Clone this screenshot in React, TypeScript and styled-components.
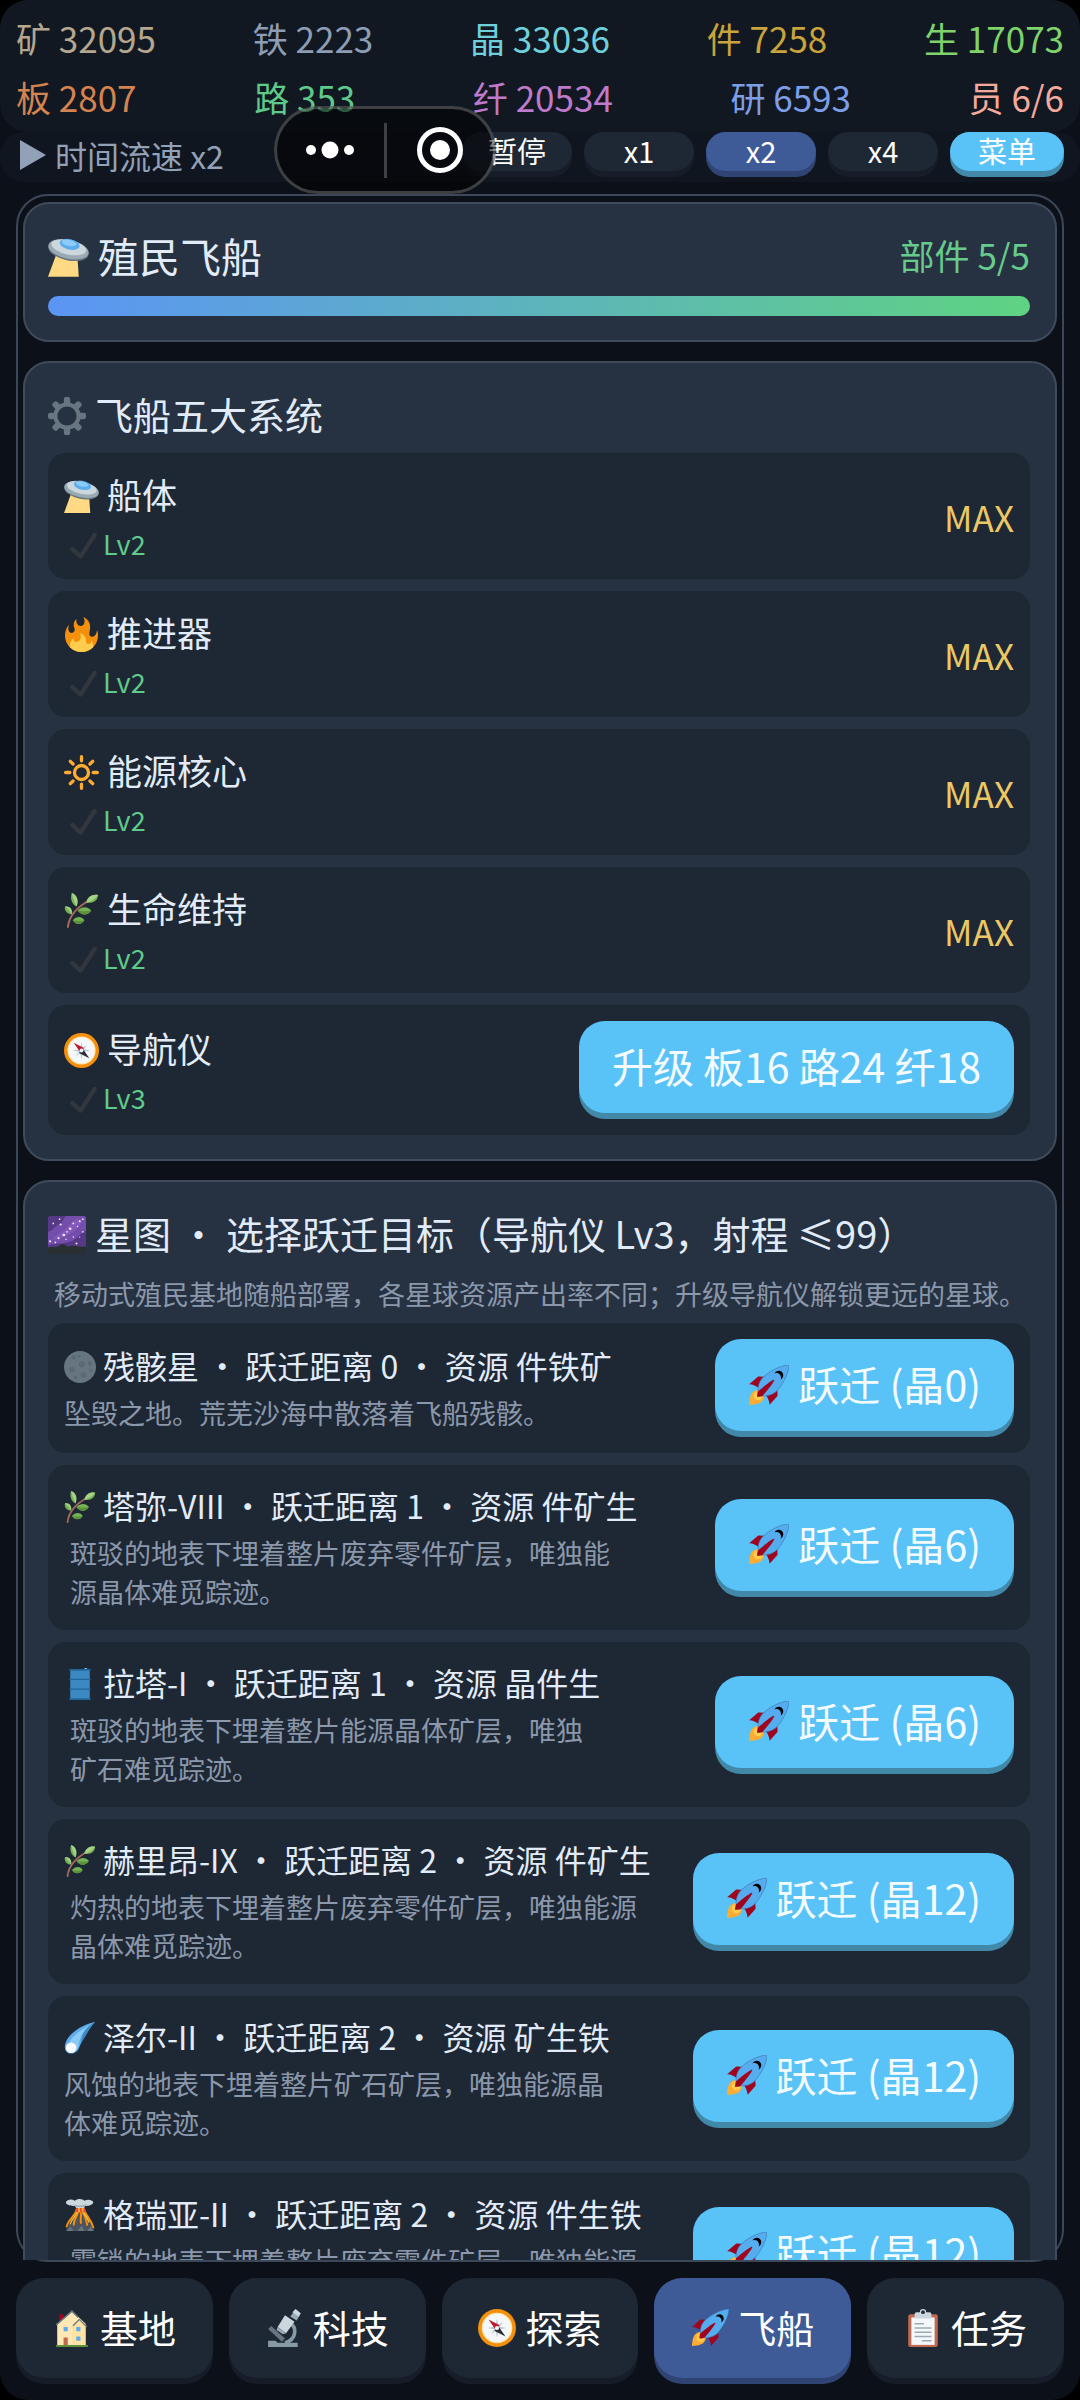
import {ReactNode, useState} from "react";
import styled, {createGlobalStyle} from "styled-components";

const GlobalStyle = createGlobalStyle`
  * {
    box-sizing: border-box;
  }

  body {
    margin: 0;
    background: #000;
    color: #e2ebf8;
    font-family: "Noto Sans CJK SC", sans-serif;
    font-weight: 400;
  }

  button {
    border: none;
    padding: 0;
    color: inherit;
    font: inherit;
    cursor: pointer;
  }

  h1, h2, h3, p, ul {
    margin: 0;
    padding: 0;
    font-weight: inherit;
    list-style: none;
  }
`

const Shell = styled.div`
  position: relative;
  height: 100vh;
  display: flex;
  flex-direction: column;
  overflow: hidden;
  border-radius: 28px;
  background: #0c1119;
`

const ResourceBar = styled.header`
  padding: 8px 16px 6px;
  border-radius: 28px;
  background: #111821;
`

const ResourceRow = styled.div`
  display: flex;
  justify-content: space-between;
  font-size: 35px;
  line-height: 59px;
`

const Resource = styled.span<{ $color: string }>`
  color: ${(p) => p.$color};
  white-space: nowrap;
`

const SpeedBar = styled.div`
  height: 50px;
  padding: 0 16px;
  display: flex;
  align-items: flex-start;
  gap: 12px;
  border-radius: 24px;
  background: #10161f;
`

const SpeedLabel = styled.div`
  flex: 1;
  display: flex;
  align-items: center;
  gap: 9px;
  padding-left: 4px;
  font-size: 32px;
  line-height: 46px;
  color: #93a1b8;
  white-space: nowrap;
`

type Tone = "dark" | "active" | "primary";

const tones: Record<Tone, { face: string, edge: string }> = {
    dark: {face: "#1e2734", edge: "#161d28"},
    active: {face: "#3e5a97", edge: "#304473"},
    primary: {face: "#59c3f7", edge: "#4289a9"},
};

const SpeedButton = styled.button<{ $tone: Tone }>`
  width: ${(p) => p.$tone === "primary" ? 114 : 110}px;
  height: 39px;
  padding-bottom: 2px;
  border-radius: 20px;
  background: ${(p) => tones[p.$tone].face};
  box-shadow: 0 6px 0 ${(p) => tones[p.$tone].edge};
  color: #fff;
  font-size: 29px;
  line-height: 37px;
`

const Capsule = styled.div`
  position: absolute;
  top: 106px;
  left: 274px;
  width: 222px;
  height: 88px;
  display: flex;
  align-items: center;
  border: 3px solid rgba(255, 255, 255, 0.22);
  border-radius: 44px;
  background: rgba(0, 0, 0, 0.55);
`

const CapsuleButton = styled.button`
  flex: 1;
  height: 100%;
  display: flex;
  align-items: center;
  justify-content: center;
  background: none;
`

const CapsuleDivider = styled.span`
  width: 3px;
  height: 55px;
  background: #3d4045;
`

const Viewport = styled.main`
  flex: 1;
  min-height: 0;
  margin: 12px 16px 0;
  padding: 6px 5px 0;
  border: 2px solid #3c4757;
  border-radius: 32px;
`

const Scroller = styled.div`
  height: 100%;
  display: flex;
  flex-direction: column;
  gap: 19px;
  overflow: hidden;
`

const Card = styled.section`
  flex: none;
  padding: 22px 25px 24px 23px;
  border: 2px solid #3f4b5b;
  border-radius: 26px;
  background: #263141;
`

const CardHead = styled.div`
  display: flex;
  justify-content: space-between;
  align-items: center;
  line-height: 58px;
`

const ShipTitle = styled.h1`
  display: flex;
  align-items: center;
  gap: 9px;
  font-size: 41px;
`

const PartCount = styled.span`
  font-size: 35px;
  color: #66cb8c;
`

const Progress = styled.div`
  height: 20px;
  margin-top: 12px;
  border-radius: 10px;
  background: linear-gradient(90deg, #5b95f5, #5fd382);
`

const CardTitle = styled.h2`
  display: flex;
  align-items: center;
  gap: 9px;
  margin-bottom: 6px;
  font-size: 38px;
  line-height: 58px;
  white-space: nowrap;
`

const Intro = styled.p`
  padding-left: 6px;
  font-size: 27px;
  line-height: 51px;
  color: #8b98ab;
`

const RowList = styled.ul`
  display: flex;
  flex-direction: column;
  gap: 12px;
  padding-top: 4px;
`

const Row = styled.li`
  min-height: 126px;
  padding: 16px;
  display: flex;
  align-items: center;
  justify-content: space-between;
  gap: 24px;
  border-radius: 18px;
  background: #1e2734;
`

const SystemName = styled.h3`
  display: flex;
  align-items: center;
  gap: 8px;
  margin-bottom: 5px;
  font-size: 35px;
  line-height: 50px;
`

const Level = styled.div`
  display: flex;
  align-items: center;
  gap: 6px;
  padding-left: 6px;
  font-size: 27px;
  line-height: 39px;
  color: #5fcb8b;
`

const MaxMark = styled.span`
  font-size: 35px;
  color: #ecc765;
`

const PlanetInfo = styled.div`
  flex: 1;
  padding-bottom: 3px;
`

const PlanetName = styled.h3`
  display: flex;
  align-items: center;
  gap: 7px;
  font-size: 32px;
  line-height: 48px;
  white-space: nowrap;
`

const PlanetText = styled.p<{ $indent: boolean }>`
  margin-top: 4px;
  padding-left: ${(p) => p.$indent ? 6 : 0}px;
  font-size: 27px;
  line-height: 39px;
  color: #8b98ab;
`

const ActionButton = styled.button`
  flex: none;
  height: 92px;
  margin-bottom: 6px;
  padding: 0 33px 4px;
  display: flex;
  align-items: center;
  gap: 9px;
  border-radius: 26px;
  background: ${tones.primary.face};
  box-shadow: 0 6px 0 ${tones.primary.edge};
  color: #f4fbff;
  font-size: 41px;
  line-height: 60px;
  white-space: nowrap;
`

const TabBar = styled.nav`
  display: flex;
  gap: 16px;
  padding: 16px 16px 22px;
`

const TabButton = styled.button<{ $tone: Tone }>`
  flex: 1;
  height: 100px;
  padding-bottom: 4px;
  display: flex;
  align-items: center;
  justify-content: center;
  gap: 9px;
  border-radius: 28px;
  background: ${(p) => tones[p.$tone].face};
  box-shadow: 0 6px 0 ${(p) => tones[p.$tone].edge};
  color: #fff;
  font-size: 38px;
`

const IconSvg = styled.svg`
  flex: none;
  width: 1em;
  height: 1em;
  margin-top: 4px;
`

const icons: Record<string, ReactNode> = {
    ufo: <>
        <path fill="#FFD983" d="M7 16L0 35h27l-1-15z"/>
        <ellipse cx="18" cy="12" rx="18" ry="8.500" transform="rotate(12 18 12)" fill="#66757F"/>
        <ellipse cx="18" cy="10.800" rx="18" ry="8.200" transform="rotate(12 18 10.800)" fill="#99AAB5"/>
        <ellipse cx="18.300" cy="9" rx="15.500" ry="6.400" transform="rotate(12 18.300 9)" fill="#CCD6DD"/>
        <ellipse cx="19" cy="6.500" rx="9" ry="4.600" transform="rotate(12 19 6.500)" fill="#5DADEC"/>
        <ellipse cx="18.500" cy="5.200" rx="6.500" ry="2.600" transform="rotate(12 18.500 5.200)" fill="#8CCAF7"/>
    </>,
    gear: <path fill="#66757F" d="M34 15h-3.362c-.324-1.369-.864-2.651-1.582-3.814l2.379-2.379c.781-.781.781-2.048 0-2.829l-1.414-1.414c-.781-.781-2.047-.781-2.828 0l-2.379 2.379C23.65 6.225 22.369 5.686 21 5.362V2c0-1.104-.896-2-2-2h-2c-1.104 0-2 .896-2 2v3.362c-1.369.324-2.651.864-3.814 1.582L8.808 4.565c-.781-.781-2.048-.781-2.828 0L4.565 5.979c-.781.781-.781 2.048-.001 2.829l2.379 2.379C6.225 12.35 5.686 13.632 5.362 15H2c-1.104 0-2 .896-2 2v2c0 1.104.896 2 2 2h3.362c.324 1.368.864 2.65 1.582 3.813l-2.379 2.379c-.78.78-.78 2.048.001 2.829l1.414 1.414c.78.78 2.047.78 2.828 0l2.379-2.379c1.163.719 2.445 1.258 3.814 1.582V34c0 1.104.896 2 2 2h2c1.104 0 2-.896 2-2v-3.362c1.368-.324 2.65-.864 3.813-1.582l2.379 2.379c.781.781 2.047.781 2.828 0l1.414-1.414c.781-.781.781-2.048 0-2.829l-2.379-2.379c.719-1.163 1.258-2.445 1.582-3.814H34c1.104 0 2-.896 2-2v-2C36 15.896 35.104 15 34 15zM18 27c-4.970 0-9-4.030-9-9s4.030-9 9-9 9 4.030 9 9-4.030 9-9 9z"/>,
    fire: <>
        <path fill="#F4900C" d="M35 19c0-2.062-.367-4.039-1.04-5.868-.46 5.389-3.333 8.157-6.335 6.868-2.812-1.208-.917-5.917-.777-8.164.236-3.809-.012-8.169-6.931-11.794 2.875 5.5.333 8.917-2.333 9.125-2.958.231-5.667-2.542-4.667-7.042-3.238 2.386-3.332 6.402-2.333 9 1.042 2.708-.042 4.958-2.583 5.208-2.84.28-4.418-3.041-2.963-8.333C2.52 10.965 1 14.805 1 19c0 9.389 7.611 17 17 17s17-7.611 17-17z"/>
        <path fill="#FFCC4D" d="M28.394 23.999c.148 3.084-2.561 4.293-4.019 3.709-2.106-.843-1.541-2.291-2.083-5.291s-2.625-5.083-5.708-6c2.25 6.333-1.247 8.667-3.08 9.084-1.872.426-3.753-.001-3.968-4.007C7.352 23.668 6 26.676 6 30c0 .368.023.73.055 1.09C9.125 34.124 13.342 36 18 36s8.875-1.876 11.945-4.91c.032-.36.055-.722.055-1.09 0-2.187-.584-4.236-1.606-6.001z"/>
    </>,
    sun: <g fill="none" stroke="#FFAC33" strokeWidth="3.4" strokeLinecap="round">
        <circle cx="18" cy="18" r="7.200"/>
        <path d="M18 1.700v4.300M18 30v4.300M1.700 18h4.300M30 18h4.300M6.500 6.500l2.800 2.800M26.700 26.700l2.800 2.800M6.500 29.500l2.800-2.800M26.700 9.300l2.800-2.800"/>
    </g>,
    herb: <>
        <path fill="none" stroke="#A5695B" strokeWidth="2" strokeLinecap="round" d="M4 35C5 24 14 14 27 7"/>
        <path fill="#77B255" d="M8 0c5 2 8 7 5 14C8 12 6 5 8 0zM1 14c5-1 8 3 7 8-5 0-8-4-7-8zM35 2c0 5-4 9-12 8 1-6 6-9 12-8zM14 18c5-5 11-4 14 0-3 5-10 6-14 0zM9 28c4-5 10-4 12 0-3 5-9 5-12 0z"/>
        <path fill="#A6D388" d="M8 0c5 2 7 7 5 14C11 10 9 5 8 0zM35 2c-6-1-11 2-12 8 5-1 9-4 12-8zM1 14c5-1 8 3 7 8-2-4-4-6-7-8z"/>
        <path fill="#5C913B" d="M14 18c4 6 11 5 14 0-5 1-9 1-14 0zM9 28c3 5 9 5 12 0-4 1-8 1-12 0z"/>
    </>,
    compass: <>
        <circle cx="18" cy="18" r="18" fill="#F4900C"/>
        <circle cx="18" cy="18" r="14.500" fill="#FFE8B6"/>
        <circle cx="18" cy="18" r="13.200" fill="#F5F8FA"/>
        <path fill="#B8C5CE" d="M18 9l1.200 6.500 4.800-3.500-3.500 4.800L27 18l-6.500 1.200 3.500 4.800-4.800-3.500L18 27l-1.200-6.500L12 24l3.500-4.800L9 18l6.500-1.200L12 12l4.800 3.500z"/>
        <path fill="#BE1931" d="M10 10l10.500 5.500-4 4z"/>
        <path fill="#292F33" d="M26 26l-10.500-5.500 4-4z"/>
        <circle cx="18" cy="18" r="2" fill="#F5F8FA"/>
    </>,
    check: <path fill="#31373D" d="M34.459 1.375c-1.391-.902-3.248-.506-4.149.884L13.5 28.17l-8.198-7.58c-1.217-1.125-3.114-1.051-4.239.166-1.125 1.216-1.051 3.114.166 4.239l10.764 9.952s.309.266.452.359c.504.328 1.07.484 1.63.484.982 0 1.945-.482 2.52-1.368L35.343 5.524c.902-1.39.506-3.248-.884-4.149z"/>,
    galaxy: <>
        <path fill="#553986" d="M2 0h32a2 2 0 012 2v28H0V2a2 2 0 012-2z"/>
        <path fill="#744EAA" d="M17 0h17a2 2 0 012 2v12c-6 2-8 8-14 10-8 3-13 1-22 4V15c5-1 6-5 10-7 4-1 4-5 7-8z"/>
        <path fill="#9266CC" opacity="0.500" d="M26 3l7 0c-2 8-9 11-14 15-5 3-10 3-15 5 4-7 10-7 13-11 3-3 5-7 9-9z"/>
        <g fill="#F3EDFC">
            <circle cx="5" cy="7" r="0.800"/><circle cx="11" cy="3" r="0.800"/><circle cx="12" cy="8" r="1"/>
            <circle cx="21" cy="12" r="1.200"/><circle cx="15" cy="18" r="1.300"/><circle cx="18" cy="15" r="0.800"/>
            <circle cx="10" cy="21" r="1"/><circle cx="24" cy="7" r="0.900"/><circle cx="30" cy="5" r="0.900"/>
            <circle cx="33" cy="3" r="0.800"/><circle cx="28" cy="10" r="0.700"/><circle cx="33" cy="15" r="0.800"/>
            <circle cx="2" cy="24" r="1"/><circle cx="7" cy="25" r="0.800"/><circle cx="27" cy="26" r="0.900"/>
            <circle cx="24" cy="20" r="0.700"/><circle cx="17" cy="22" r="0.700"/><circle cx="30" cy="20" r="0.600"/>
        </g>
        <path fill="#292F33" d="M0 30c5-2 9 1 12-3 3-2 5 2 8 2 4-2 8 1 16 0v5a2 2 0 01-2 2H2a2 2 0 01-2-2z"/>
    </>,
    moon: <>
        <circle cx="18" cy="18" r="18" fill="#66757F"/>
        <g fill="#5B6876">
            <circle cx="11" cy="7" r="2.500"/><circle cx="20" cy="15" r="3.500"/><circle cx="29" cy="14" r="2.500"/>
            <circle cx="9" cy="21" r="3"/><circle cx="22" cy="27" r="3"/><circle cx="17" cy="6" r="1.500"/>
            <circle cx="13" cy="30" r="2"/><circle cx="30" cy="22" r="1.600"/>
        </g>
    </>,
    barrel: <>
        <path fill="#3B88C3" d="M7 2h22v33H7z"/>
        <path fill="#226699" d="M6 1h24v2H6zM6 12h24v1.500H6zM6 23h24v1.500H6zM6 34h24v2H6z"/>
        <path fill="#8CCAF7" d="M23 0h3v1h-3z"/>
    </>,
    comet: <>
        <path fill="#5DADEC" d="M35 0C19 3 2 15 1 27c-1 11 13 11 16 2C21 20 24 9 35 0z"/>
        <path fill="#8CCAF7" d="M30 3C18 9 6 18 5 27c0 7 8 8 11 1 1-9 5-18 14-25z"/>
        <path fill="#3B88C3" d="M35 0c-7 8-11 17-16 24 1-6 1-9 3-12C25 7 29 3 35 0z"/>
        <circle cx="8" cy="29" r="6" fill="#F5FBFF"/>
    </>,
    volcano: <>
        <path fill="#4B545D" d="M13 12h11l10 24H2z"/>
        <path fill="#66757F" d="M7 31l4 5H3zM20 30l3 6h-8zM30 31l3 5h-7z"/>
        <path fill="none" stroke="#F4900C" strokeWidth="2.200" strokeLinecap="round" d="M14 13C12 20 5 22 3 31M16 14c-1 6-5 8-5 15M19 14c1 5-1 7 0 13M21 14c2 6 4 7 5 15M23 13c2 6 7 9 10 19"/>
        <path fill="none" stroke="#FFCC4D" strokeWidth="1.200" strokeLinecap="round" d="M15 14c-1 5-6 8-8 14M22 15c2 4 5 7 6 11"/>
        <path fill="#E8532F" d="M14 9h9l2 6H12z"/>
        <path fill="#FFAC33" d="M16 9h2v6h-2zM20 9h2v5h-2z"/>
        <path fill="#CCD6DD" d="M2 4c2-4 7-4 10-2 4-3 9-2 11 0 4-2 9-1 10 2-1 3-6 4-9 4l-2 2h-8l-2-2C8 8 3 7 2 4z"/>
        <path fill="#99AAB5" d="M10 6c5 2 10 2 16 0l-3 3h-9z"/>
    </>,
    rocket: <>
        <path fill="#A0041E" d="M1 17l8-7 16 1 1 16-7 8s.001-5.999-6-12-12-6-12-6z"/>
        <path fill="#FFAC33" d="M.973 35s-.036-7.979 2.985-11S15 21.187 15 21.187 14.999 29 11.999 32c-3 3-11.026 3-11.026 3z"/>
        <circle fill="#FFCC4D" cx="8.999" cy="27" r="4"/>
        <path fill="#55ACEE" stroke="#3B6FA8" strokeWidth="0.500" d="M35.999 0s-10 0-22 10c-6 5-6 14-4 16s11 2 16-4c10-12 10-22 10-22z"/>
        <path d="M26.999 5c-1.623 0-3.013.971-3.641 2.36.502-.227 1.055-.36 1.641-.36 2.209 0 4 1.791 4 4 0 .586-.133 1.139-.359 1.64 1.389-.627 2.359-2.017 2.359-3.64 0-2.209-1.791-4-4-4z"/>
        <path fill="#A0041E" d="M8 28s0-4 1-5 13.001-10.999 14-10-9.001 13-10.001 14S8 28 8 28z"/>
    </>,
    house: <>
        <path fill="#A0041E" d="M6 5h4v8H6z"/>
        <path fill="#FFE8B6" d="M4 14L18 2l13 12v20H4z"/>
        <path fill="none" stroke="#66757F" strokeWidth="1.500" d="M3 15L18 2l6 6M19 16l6-6 7 7"/>
        <path fill="#FFD983" d="M18 17l7-7 6 6v18H18z" opacity="0.350"/>
        <path fill="#5DADEC" d="M10 17h4v4h-4zM22 17h4v4h-4zM22 26h4v4h-4z"/>
        <path fill="#C1694F" d="M10 27h4v7h-4z"/>
        <path fill="#5C913B" d="M3 34h30v2H3z"/>
    </>,
    microscope: <>
        <path fill="none" stroke="#8899A6" strokeWidth="3.500" d="M22 13c8 4 7 16-4 19"/>
        <path fill="#66757F" d="M2 19l3-3 13 12-3 3z"/>
        <path fill="#CCD6DD" d="M18 6l9 6-8 11-8-6z"/>
        <path fill="#99AAB5" d="M11 17l8 6-3 1-6-4zM27 2l5 4-3 5-6-4z"/>
        <path fill="#CCD6DD" d="M28 0l5 4-2 3-6-4z"/>
        <path fill="#8899A6" d="M2 30h7l2 2h19v4H2z"/>
    </>,
    clipboard: <>
        <rect x="4" y="5" width="28" height="31" rx="2" fill="#C1694F"/>
        <path fill="#F5F8FA" d="M7 8h22v26H7z"/>
        <path fill="#CCD6DD" d="M12 3h3a3 3 0 016 0h3a2 2 0 012 2v4H10V5a2 2 0 012-2z"/>
        <circle cx="18" cy="3" r="1.800" fill="#292F33"/>
        <path stroke="#99AAB5" strokeWidth="1.500" d="M10 14h9M10 18h16M10 22h16M10 26h16M17 30h9"/>
    </>,
};

const Icon = ({name}: { name: string }) => (
    <IconSvg viewBox="0 0 36 36" aria-hidden="true">{icons[name]}</IconSvg>
);

const resources = [
    [
        {text: "矿 32095", color: "#b5a78f"},
        {text: "铁 2223", color: "#8d9db5"},
        {text: "晶 33036", color: "#6fd0dc"},
        {text: "件 7258", color: "#c9a33b"},
        {text: "生 17073", color: "#7ed36a"},
    ],
    [
        {text: "板 2807", color: "#d58350"},
        {text: "路 353", color: "#5fc98a"},
        {text: "纤 20534", color: "#bf7acb"},
        {text: "研 6593", color: "#7d9ee6"},
        {text: "员 6/6", color: "#f3aa9c"},
    ],
];

const systems = [
    {icon: "ufo", name: "船体", level: 2},
    {icon: "fire", name: "推进器", level: 2},
    {icon: "sun", name: "能源核心", level: 2},
    {icon: "herb", name: "生命维持", level: 2},
    {icon: "compass", name: "导航仪", level: 3, cost: "板16 路24 纤18"},
];

const planets = [
    {icon: "moon", name: "残骸星", distance: 0, yields: "件铁矿", cost: 0, indent: false, text: ["坠毁之地。荒芜沙海中散落着飞船残骸。"]},
    {icon: "herb", name: "塔弥-VIII", distance: 1, yields: "件矿生", cost: 6, indent: true, text: ["斑驳的地表下埋着整片废弃零件矿层，唯独能", "源晶体难觅踪迹。"]},
    {icon: "barrel", name: "拉塔-I", distance: 1, yields: "晶件生", cost: 6, indent: true, text: ["斑驳的地表下埋着整片能源晶体矿层，唯独", "矿石难觅踪迹。"]},
    {icon: "herb", name: "赫里昂-IX", distance: 2, yields: "件矿生", cost: 12, indent: true, text: ["灼热的地表下埋着整片废弃零件矿层，唯独能源", "晶体难觅踪迹。"]},
    {icon: "comet", name: "泽尔-II", distance: 2, yields: "矿生铁", cost: 12, indent: false, text: ["风蚀的地表下埋着整片矿石矿层，唯独能源晶", "体难觅踪迹。"]},
    {icon: "volcano", name: "格瑞亚-II", distance: 2, yields: "件生铁", cost: 12, indent: true, text: ["雾锁的地表下埋着整片废弃零件矿层，唯独能源", "晶体难觅踪迹。"]},
];

const tabs = [
    {icon: "house", name: "基地"},
    {icon: "microscope", name: "科技"},
    {icon: "compass", name: "探索"},
    {icon: "rocket", name: "飞船"},
    {icon: "clipboard", name: "任务"},
];

const speeds = ["暂停", "x1", "x2", "x4"];

const App = () => {
    const [speed, setSpeed] = useState("x2");
    const [tab, setTab] = useState("飞船");

    return (
        <>
            <GlobalStyle/>
            <Shell>
                <ResourceBar>
                    {resources.map((row, index) => (
                        <ResourceRow key={index}>
                            {row.map((item) => <Resource key={item.text} $color={item.color}>{item.text}</Resource>)}
                        </ResourceRow>
                    ))}
                </ResourceBar>
                <SpeedBar>
                    <SpeedLabel>
                        <svg width="26" height="30" viewBox="0 0 26 30" aria-hidden="true">
                            <path fill="#93a1b8" d="M0 0l26 15L0 30z"/>
                        </svg>
                        时间流速 {speed}
                    </SpeedLabel>
                    {speeds.map((item) => (
                        <SpeedButton key={item} $tone={item === speed ? "active" : "dark"} onClick={() => setSpeed(item)}>
                            {item}
                        </SpeedButton>
                    ))}
                    <SpeedButton $tone="primary">菜单</SpeedButton>
                </SpeedBar>
                <Viewport>
                    <Scroller>
                        <Card>
                            <CardHead>
                                <ShipTitle><Icon name="ufo"/>殖民飞船</ShipTitle>
                                <PartCount>部件 5/5</PartCount>
                            </CardHead>
                            <Progress/>
                        </Card>
                        <Card>
                            <CardTitle><Icon name="gear"/>飞船五大系统</CardTitle>
                            <RowList>
                                {systems.map((item) => (
                                    <Row key={item.name}>
                                        <div>
                                            <SystemName><Icon name={item.icon}/>{item.name}</SystemName>
                                            <Level><Icon name="check"/>Lv{item.level}</Level>
                                        </div>
                                        {item.cost
                                            ? <ActionButton>升级 {item.cost}</ActionButton>
                                            : <MaxMark>MAX</MaxMark>}
                                    </Row>
                                ))}
                            </RowList>
                        </Card>
                        <Card>
                            <CardTitle><Icon name="galaxy"/>星图 • 选择跃迁目标（导航仪 Lv3，射程 ≤99）</CardTitle>
                            <Intro>移动式殖民基地随船部署，各星球资源产出率不同；升级导航仪解锁更远的星球。</Intro>
                            <RowList>
                                {planets.map((item) => (
                                    <Row key={item.name}>
                                        <PlanetInfo>
                                            <PlanetName>
                                                <Icon name={item.icon}/>
                                                {item.name} • 跃迁距离 {item.distance} • 资源 {item.yields}
                                            </PlanetName>
                                            <PlanetText $indent={item.indent}>
                                                {item.text.map((line, index) => (
                                                    <span key={line}>{index > 0 && <br/>}{line}</span>
                                                ))}
                                            </PlanetText>
                                        </PlanetInfo>
                                        <ActionButton><Icon name="rocket"/>跃迁 (晶{item.cost})</ActionButton>
                                    </Row>
                                ))}
                            </RowList>
                        </Card>
                    </Scroller>
                </Viewport>
                <TabBar>
                    {tabs.map((item) => (
                        <TabButton key={item.name} $tone={item.name === tab ? "active" : "dark"} onClick={() => setTab(item.name)}>
                            <Icon name={item.icon}/>{item.name}
                        </TabButton>
                    ))}
                </TabBar>
                <Capsule>
                    <CapsuleButton aria-label="更多">
                        <svg width="48" height="20" viewBox="0 0 48 20" fill="#fff">
                            <circle cx="5" cy="10" r="5"/>
                            <circle cx="24" cy="10" r="8.500"/>
                            <circle cx="43" cy="10" r="5"/>
                        </svg>
                    </CapsuleButton>
                    <CapsuleDivider/>
                    <CapsuleButton aria-label="关闭">
                        <svg width="48" height="48" viewBox="0 0 48 48">
                            <circle cx="24" cy="24" r="20.500" fill="none" stroke="#fff" strokeWidth="5"/>
                            <circle cx="24" cy="24" r="10" fill="#fff"/>
                        </svg>
                    </CapsuleButton>
                </Capsule>
            </Shell>
        </>
    );
}

export default App;
